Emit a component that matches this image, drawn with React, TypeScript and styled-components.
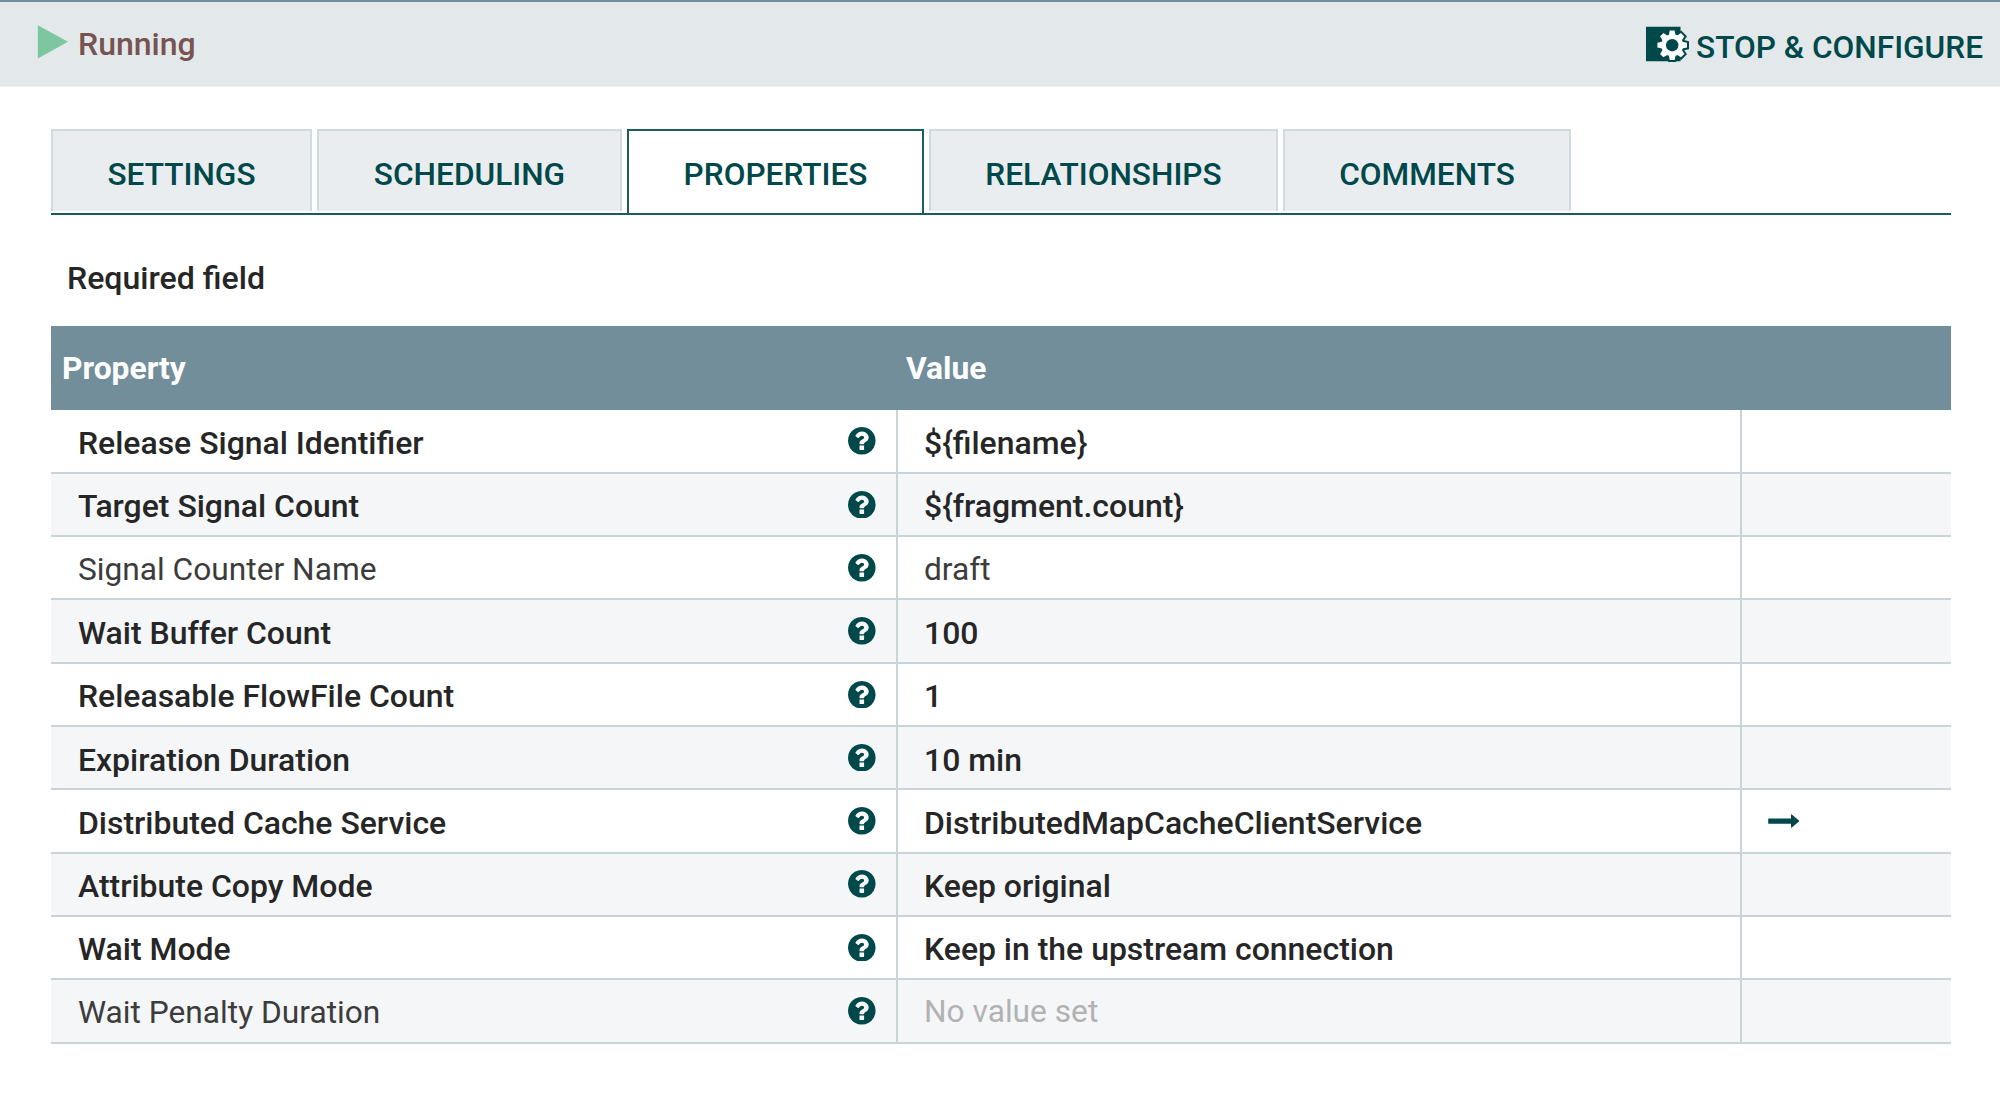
import React from "react";
import styled, { createGlobalStyle } from "styled-components";

const colors = {
  teal: "#004849",
  slate: "#728e9b",
  line: "#c9d4d9",
  text: "#262626",
};

const GlobalStyle = createGlobalStyle`
  * { box-sizing: border-box; }
  body {
    margin: 0;
    background: #fff;
    color: ${colors.text};
    font-family: Roboto, "Liberation Sans", sans-serif;
  }
`;

const Dialog = styled.div`
  height: 1101px;
  overflow: hidden;
  background: #fff;
`;

const StatusBar = styled.header`
  display: flex;
  justify-content: space-between;
  height: 87px;
  padding: 0 17px 0 37px;
  background: #e3e8eb;
  border-top: 2px solid ${colors.slate};
  border-bottom: 1px solid #eff2f3;
`;

const Status = styled.div`
  display: flex;
  align-items: flex-start;
  gap: 9px;
  padding-top: 23px;
  color: #775351;
  font-size: 32px;
  font-weight: 500;
  line-height: 38px;
`;

const StopButton = styled.button`
  display: flex;
  align-items: flex-start;
  gap: 6px;
  height: 70px;
  padding: 22px 0 0;
  border: 0;
  background: none;
  color: ${colors.teal};
  font: 500 31.6px/38px Roboto, "Liberation Sans", sans-serif;
  white-space: nowrap;
`;

const StopLabel = styled.span`
  padding-top: 5px;
`;

const Body = styled.main`
  padding: 42px 49px 0 51px;
`;

const TabBar = styled.nav`
  display: flex;
  gap: 5px;
  height: 86px;
  border-bottom: 2px solid #1c5c5e;
`;

const Tab = styled.button<{ $width: number; $active?: boolean }>`
  width: ${(p) => p.$width}px;
  height: ${(p) => (p.$active ? 84 : 82)}px;
  padding: 7px 0 0;
  display: flex;
  justify-content: center;
  border: 2px solid ${(p) => (p.$active ? "#1c5c5e" : "#cfdcdd")};
  border-bottom: 0;
  background: ${(p) => (p.$active ? "#fff" : "#e9edf0")};
  color: ${colors.teal};
  font: 500 31.6px/74px Roboto, "Liberation Sans", sans-serif;
`;

const RequiredNote = styled.div`
  padding: 44px 0 0 16px;
  height: 111px;
  font-size: 32.1px;
  font-weight: 500;
  line-height: 38px;
`;

const Table = styled.div`
  width: 1900px;
`;

const HeaderRow = styled.div`
  display: grid;
  grid-template-columns: 844px 1fr;
  height: 84.45px;
  background: ${colors.slate};
  color: #fff;
  font-size: 31.8px;
  font-weight: 700;
  line-height: 84px;
`;

const HeaderCell = styled.div`
  padding-left: 11px;
`;

const Row = styled.div<{ $striped: boolean }>`
  display: grid;
  grid-template-columns: 847px 844px 1fr;
  height: 63.32px;
  background: ${(p) => (p.$striped ? "#f4f6f8" : "#fff")};
`;

const Cell = styled.div`
  display: flex;
  align-items: center;
  justify-content: space-between;
  min-width: 0;
  padding-left: 26px;
  border-right: 2px solid ${colors.line};
  border-bottom: 2px solid ${colors.line};
  &:first-child { padding-left: 27px; padding-right: 20px; }
  &:last-child { border-right: 0; padding-left: 25px; }
`;

const Label = styled.span<{ $required: boolean; $unset?: boolean }>`
  padding-top: ${(p) => (p.$unset ? 1.5 : p.$required ? 3.7 : 4.7)}px;
  color: ${(p) => (p.$unset ? "#b0b2b3" : p.$required ? colors.text : "#3c3c3c")};
  font-size: ${(p) => (p.$required ? 31.95 : 31.7)}px;
  font-weight: ${(p) => (p.$required ? 500 : 400)};
  line-height: 38px;
  white-space: nowrap;
`;

const PlayIcon = () => (
  <svg width="32" height="34" viewBox="0 0 32 34">
    <path d="M.8 .3 31 16.8 .8 33.4z" fill="#7dc7a0" />
  </svg>
);

const gearTeeth = [0, 45, 90, 135, 180, 225, 270, 315];

const Gear = () => (
  <g>
    <circle r="11" />
    {gearTeeth.map((a) => (
      <path key={a} d="M-3.4 -10 -2.4 -14.8H2.4L3.4 -10z" transform={`rotate(${a})`} />
    ))}
  </g>
);

const StopConfigureIcon = () => (
  <svg width="45" height="40" viewBox="0 0 45 40">
    <path d="M1 2.7h34.5v34.6H1z" fill={colors.teal} />
    <g transform="translate(27.2 21.2)">
      <g fill={colors.teal} stroke={colors.teal} strokeWidth="4">
        <Gear />
      </g>
      <g fill="#fff">
        <Gear />
      </g>
      <circle r="6.2" fill={colors.teal} />
    </g>
  </svg>
);

const HelpIcon = () => (
  <svg width="27.6" height="27.6" viewBox="128 128 1536 1536" fill={colors.teal}>
    <path d="M1024 1376v-192q0-14-9-23t-23-9h-192q-14 0-23 9t-9 23v192q0 14 9 23t23 9h192q14 0 23-9t9-23zm256-672q0-88-55.500-163t-138.500-116-170-41q-243 0-371 213-15 24 8 42l132 100q7 6 19 6 16 0 25-12 53-68 86-92 34-24 86-24 48 0 85.500 26t37.500 59q0 38-20 61t-68 45q-63 28-115.500 86.500t-52.500 125.500v36q0 14 9 23t23 9h192q14 0 23-9t9-23q0-19 21.500-49.500t54.500-49.500q32-18 49-28.500t46-35 44.500-48 28-60.500 12.500-81zm384 192q0 209-103 385.500t-279.500 279.500-385.500 103-385.500-103-279.500-279.500-103-385.500 103-385.500 279.500-279.500 385.500-103 385.500 103 279.500 279.500 103 385.500z" />
  </svg>
);

const ArrowIcon = () => (
  <svg width="34" height="16" viewBox="0 0 34 16" fill={colors.teal}>
    <path d="M1.800 5.400H24V2q0-1 .8-.5L32 7.500q.5.500 0 1L24.800 14.500Q24 15 24 14V10.800H1.800q-.6 0-.6-.6V6q0-.6.6-.6z" />
  </svg>
);

const tabs = [
  { name: "SETTINGS", width: 261 },
  { name: "SCHEDULING", width: 305 },
  { name: "PROPERTIES", width: 297, active: true },
  { name: "RELATIONSHIPS", width: 349 },
  { name: "COMMENTS", width: 288 },
];

type Property = { name: string; value?: string; required: boolean; link?: boolean };

const properties: Property[] = [
  { name: "Release Signal Identifier", value: "${filename}", required: true },
  { name: "Target Signal Count", value: "${fragment.count}", required: true },
  { name: "Signal Counter Name", value: "draft", required: false },
  { name: "Wait Buffer Count", value: "100", required: true },
  { name: "Releasable FlowFile Count", value: "1", required: true },
  { name: "Expiration Duration", value: "10 min", required: true },
  { name: "Distributed Cache Service", value: "DistributedMapCacheClientService", required: true, link: true },
  { name: "Attribute Copy Mode", value: "Keep original", required: true },
  { name: "Wait Mode", value: "Keep in the upstream connection", required: true },
  { name: "Wait Penalty Duration", required: false },
];

export default function App() {
  return (
    <Dialog>
      <GlobalStyle />
      <StatusBar>
        <Status>
          <PlayIcon />
          <span>Running</span>
        </Status>
        <StopButton>
          <StopConfigureIcon />
          <StopLabel>STOP &amp; CONFIGURE</StopLabel>
        </StopButton>
      </StatusBar>
      <Body>
        <TabBar>
          {tabs.map((t) => (
            <Tab key={t.name} $width={t.width} $active={t.active}>
              {t.name}
            </Tab>
          ))}
        </TabBar>
        <RequiredNote>Required field</RequiredNote>
        <Table>
          <HeaderRow>
            <HeaderCell>Property</HeaderCell>
            <HeaderCell>Value</HeaderCell>
          </HeaderRow>
          {properties.map((p, i) => (
            <Row key={p.name} $striped={i % 2 === 1}>
              <Cell>
                <Label $required={p.required}>{p.name}</Label>
                <HelpIcon />
              </Cell>
              <Cell>
                <Label $required={p.required} $unset={!p.value}>
                  {p.value ?? "No value set"}
                </Label>
              </Cell>
              <Cell>{p.link && <ArrowIcon />}</Cell>
            </Row>
          ))}
        </Table>
      </Body>
    </Dialog>
  );
}
